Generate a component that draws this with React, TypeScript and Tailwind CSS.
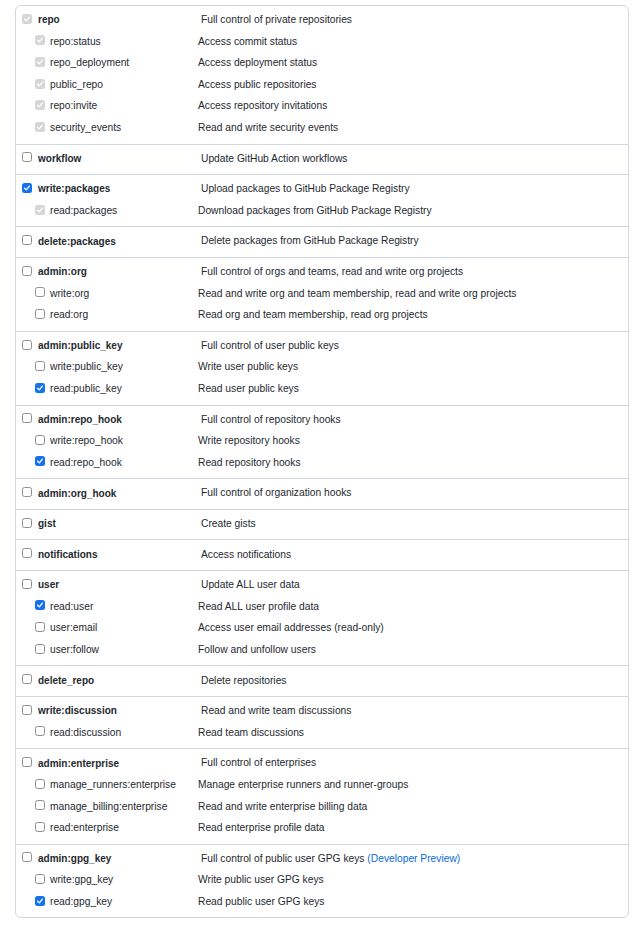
type Mark = "off" | "on" | "locked";

type Scope = {
  name: string;
  desc: string;
  mark: Mark;
  link?: string;
};

type Group = {
  parent: Scope;
  children: Scope[];
};

const groups: Group[] = [
  {
    parent: { name: "repo", desc: "Full control of private repositories", mark: "locked" },
    children: [
      { name: "repo:status", desc: "Access commit status", mark: "locked" },
      { name: "repo_deployment", desc: "Access deployment status", mark: "locked" },
      { name: "public_repo", desc: "Access public repositories", mark: "locked" },
      { name: "repo:invite", desc: "Access repository invitations", mark: "locked" },
      { name: "security_events", desc: "Read and write security events", mark: "locked" },
    ],
  },
  {
    parent: { name: "workflow", desc: "Update GitHub Action workflows", mark: "off" },
    children: [],
  },
  {
    parent: { name: "write:packages", desc: "Upload packages to GitHub Package Registry", mark: "on" },
    children: [
      { name: "read:packages", desc: "Download packages from GitHub Package Registry", mark: "locked" },
    ],
  },
  {
    parent: { name: "delete:packages", desc: "Delete packages from GitHub Package Registry", mark: "off" },
    children: [],
  },
  {
    parent: { name: "admin:org", desc: "Full control of orgs and teams, read and write org projects", mark: "off" },
    children: [
      { name: "write:org", desc: "Read and write org and team membership, read and write org projects", mark: "off" },
      { name: "read:org", desc: "Read org and team membership, read org projects", mark: "off" },
    ],
  },
  {
    parent: { name: "admin:public_key", desc: "Full control of user public keys", mark: "off" },
    children: [
      { name: "write:public_key", desc: "Write user public keys", mark: "off" },
      { name: "read:public_key", desc: "Read user public keys", mark: "on" },
    ],
  },
  {
    parent: { name: "admin:repo_hook", desc: "Full control of repository hooks", mark: "off" },
    children: [
      { name: "write:repo_hook", desc: "Write repository hooks", mark: "off" },
      { name: "read:repo_hook", desc: "Read repository hooks", mark: "on" },
    ],
  },
  {
    parent: { name: "admin:org_hook", desc: "Full control of organization hooks", mark: "off" },
    children: [],
  },
  {
    parent: { name: "gist", desc: "Create gists", mark: "off" },
    children: [],
  },
  {
    parent: { name: "notifications", desc: "Access notifications", mark: "off" },
    children: [],
  },
  {
    parent: { name: "user", desc: "Update ALL user data", mark: "off" },
    children: [
      { name: "read:user", desc: "Read ALL user profile data", mark: "on" },
      { name: "user:email", desc: "Access user email addresses (read-only)", mark: "off" },
      { name: "user:follow", desc: "Follow and unfollow users", mark: "off" },
    ],
  },
  {
    parent: { name: "delete_repo", desc: "Delete repositories", mark: "off" },
    children: [],
  },
  {
    parent: { name: "write:discussion", desc: "Read and write team discussions", mark: "off" },
    children: [
      { name: "read:discussion", desc: "Read team discussions", mark: "off" },
    ],
  },
  {
    parent: { name: "admin:enterprise", desc: "Full control of enterprises", mark: "off" },
    children: [
      { name: "manage_runners:enterprise", desc: "Manage enterprise runners and runner-groups", mark: "off" },
      { name: "manage_billing:enterprise", desc: "Read and write enterprise billing data", mark: "off" },
      { name: "read:enterprise", desc: "Read enterprise profile data", mark: "off" },
    ],
  },
  {
    parent: {
      name: "admin:gpg_key",
      desc: "Full control of public user GPG keys",
      mark: "off",
      link: "(Developer Preview)",
    },
    children: [
      { name: "write:gpg_key", desc: "Write public user GPG keys", mark: "off" },
      { name: "read:gpg_key", desc: "Read public user GPG keys", mark: "on" },
    ],
  },
];

function Box({ mark }: { mark: Mark }) {
  if (mark === "off") {
    return (
      <span className="block w-[10px] h-[10px] shrink-0 rounded-[2.5px] border border-[#8e8e8e] bg-white -mt-[2px]" />
    );
  }
  const fill = mark === "on" ? "bg-[#1472f0]" : "bg-[#d6d6d6]";
  return (
    <span className={`flex items-center justify-center w-[10px] h-[10px] shrink-0 rounded-[2.5px] -mt-[2px] ${fill}`}>
      <svg viewBox="0 0 10 10" className="w-[8px] h-[8px]">
        <path d="M2 5.3 L4.1 7.4 L8 2.6" fill="none" stroke="white" strokeWidth="1.6" strokeLinecap="round" strokeLinejoin="round" />
      </svg>
    </span>
  );
}

function Row({ scope, child }: { scope: Scope; child: boolean }) {
  return (
    <div className="flex items-center h-[21.6px] pb-[2px]">
      <div className={child ? "flex items-center w-[182px] pl-[19px] gap-[5px]" : "flex items-center w-[185px] pl-[6px] gap-[6px]"}>
        <Box mark={scope.mark} />
        <span className={child ? "text-[10.25px]" : "text-[10px] font-bold"}>{scope.name}</span>
      </div>
      <span className="text-[10.25px] text-[#24292f]">
        {scope.desc}
        {scope.link && <span className="text-[#0969da]"> {scope.link}</span>}
      </span>
    </div>
  );
}

export default function App() {
  return (
    <div className="min-h-[927px] bg-white pt-[5px] pl-[15px] font-['Liberation_Sans',Arial,sans-serif] text-[#24292f]">
      <div className="w-[614px] rounded-[6px] border border-[#d0d7de] divide-y divide-[#d0d7de]">
        {groups.map((group) => {
          return (
            <div key={group.parent.name} className="py-1">
              <Row scope={group.parent} child={false} />
              {group.children.map((scope) => {
                return <Row key={scope.name} scope={scope} child={true} />;
              })}
            </div>
          );
        })}
      </div>
    </div>
  );
}
